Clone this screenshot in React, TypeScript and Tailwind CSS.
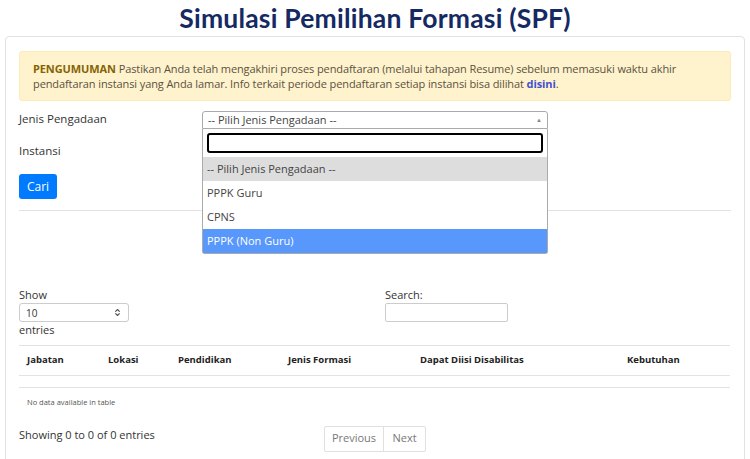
import { ChevronsUpDown } from 'lucide-react'

const columns = [
  { label: 'Jabatan', w: 'w-[81px]' },
  { label: 'Lokasi', w: 'w-[70px]' },
  { label: 'Pendidikan', w: 'w-[110px]' },
  { label: 'Jenis Formasi', w: 'w-[132px]' },
  { label: 'Dapat Diisi Disabilitas', w: 'w-[207px]' },
  { label: 'Kebutuhan', w: '' },
]

const options = ['PPPK Guru', 'CPNS']

export default function App() {
  return (
    <div className="h-[459px] w-[750px] overflow-hidden bg-white font-['Open_Sans',sans-serif] text-[#333]">
      <h1 className="pt-[1px] text-center font-['Lato',sans-serif] text-[26.5px] font-bold leading-[34px] tracking-[0.2px] text-[#152a63]">
        Simulasi Pemilihan Formasi (SPF)
      </h1>

      <div className="mx-[5px] mt-[1px] h-[440px] rounded-t-sm border border-[#e2e2e2] px-[13px] pt-[14px]">
        <div className="rounded-[3px] border border-[#fcebb9] bg-[#fff3cd] py-[9px] pl-[13px] pr-[30px] text-[11px] leading-[15px] tracking-[-0.1px] text-[#5b5140]">
          <span className="font-bold text-[#856404]">PENGUMUMAN</span> Pastikan Anda telah mengakhiri proses pendaftaran (melalui tahapan Resume) sebelum memasuki waktu akhir pendaftaran instansi yang Anda lamar. Info terkait periode pendaftaran setiap instansi bisa dilihat{' '}
          <span className="font-bold text-[#3f4fd1]">disini</span>.
        </div>

        <div className="mt-[10px] flex text-[11.5px]">
          <div className="w-[183px] pt-[1px] leading-[14px]">
            <div>Jenis Pengadaan</div>
            <div className="mt-[18px]">Instansi</div>
            <button type="button" className="mt-[16px] h-[25px] w-[38px] rounded-[3px] bg-[#007bff] text-[12px] text-white">
              Cari
            </button>
          </div>

          <div className="relative w-[346px]">
            <div className="flex h-[18px] items-center justify-between rounded-t-[3px] border border-[#aaa] px-[5px] text-[11px] text-[#444]">
              <span>-- Pilih Jenis Pengadaan --</span>
              <span className="text-[6px] text-[#888]">▲</span>
            </div>
            <div className="absolute left-0 top-[18px] z-10 w-[346px] rounded-b-[3px] border border-t-0 border-[#aaa] bg-white text-[11px]">
              <div className="p-[4px]">
                <div className="h-[20px] rounded-[3px] border-2 border-black" />
              </div>
              <div className="flex h-[24px] items-center bg-[#ddd] px-[4px] text-[#444]">-- Pilih Jenis Pengadaan --</div>
              {options.map((o) => (
                <div key={o} className="flex h-[24px] items-center px-[4px] text-[#444]">
                  {o}
                </div>
              ))}
              <div className="flex h-[24px] items-center bg-[#5897fb] px-[4px] text-white">PPPK (Non Guru)</div>
            </div>
          </div>
        </div>

        <div className="mt-[11px] border-t border-[#e3e3e3]" />

        <div className="mt-[77px] flex text-[11px] leading-[14px]">
          <div className="w-[366px]">
            <div>Show</div>
            <div className="mt-[1px] flex h-[19px] w-[110px] items-center justify-between rounded-[3px] border border-[#ccc] px-[6px] text-[10px]">
              <span>10</span>
              <ChevronsUpDown className="h-[9px] w-[9px] text-[#555]" strokeWidth={3} />
            </div>
            <div className="mt-[1px]">entries</div>
          </div>
          <div>
            <div>Search:</div>
            <div className="mt-[1px] h-[19px] w-[123px] rounded-[2px] border border-[#ccc]" />
          </div>
        </div>

        <table className="mt-[8px] w-[711px] border-collapse text-left">
          <thead>
            <tr className="border-y border-[#e3e3e3]">
              {columns.map((c) => (
                <th key={c.label} className={`${c.w} h-[30px] px-[8px] text-[9.5px] font-bold text-[#222]`}>
                  {c.label}
                </th>
              ))}
            </tr>
          </thead>
          <tbody>
            <tr className="border-b border-[#e3e3e3]">
              <td colSpan={6} className="h-[12px]" />
            </tr>
            <tr>
              <td colSpan={6} className="h-[30px] px-[8px] text-[7.5px] text-[#555]">
                No data available in table
              </td>
            </tr>
          </tbody>
        </table>

        <div className="mt-[8px] flex items-start text-[11px]">
          <div className="w-[305px] pt-[1px]">Showing 0 to 0 of 0 entries</div>
          <div className="flex h-[26px] rounded-[2px] border border-[#e0e0e0] text-[#777]">
            <span className="flex w-[59px] items-center justify-center border-r border-[#e0e0e0]">Previous</span>
            <span className="flex w-[41px] items-center justify-center">Next</span>
          </div>
        </div>
      </div>
    </div>
  )
}
